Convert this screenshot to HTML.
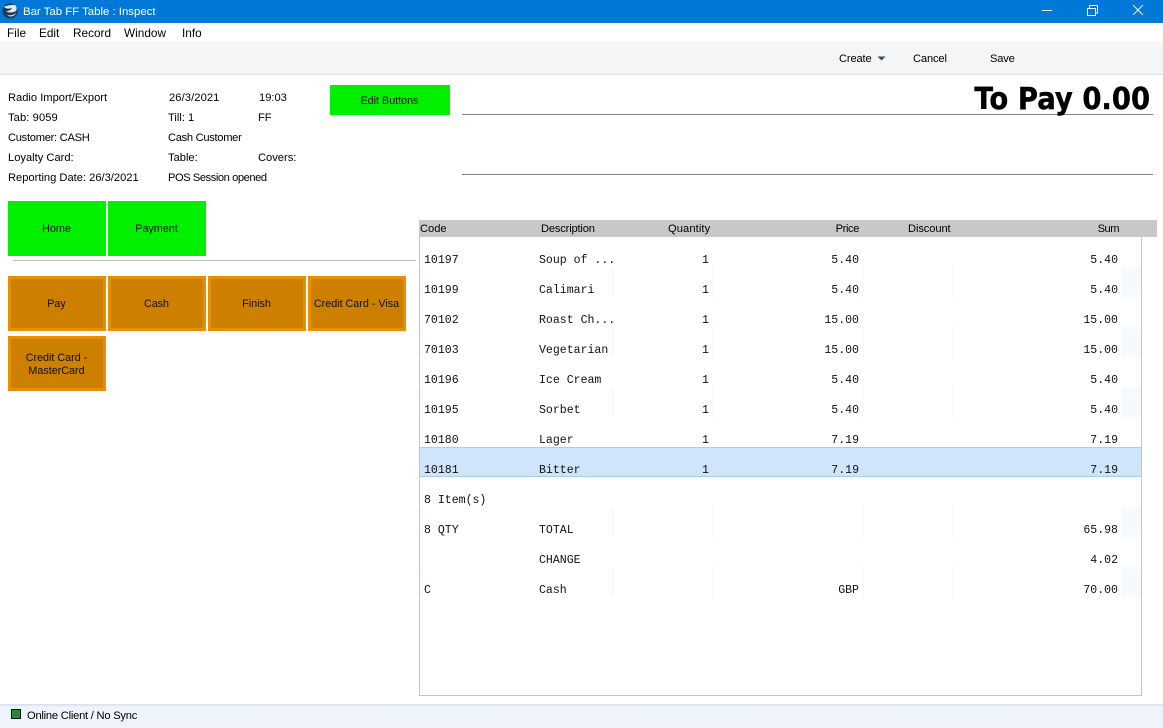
<!DOCTYPE html>
<html><head><meta charset="utf-8"><style>
html,body{margin:0;padding:0;width:1163px;height:728px;overflow:hidden;background:#fff}
body{position:relative;font-family:"Liberation Sans",sans-serif;font-size:11.15px;color:#000}
.a{position:absolute;white-space:nowrap;line-height:14px}
.b{position:absolute;box-sizing:border-box;display:flex;align-items:center;justify-content:center;text-align:center;line-height:13px;color:#101000;padding:2px 1px 0 0;font-size:10.75px}
.g{background:#00f000;width:98px;height:55px}
.o{background:#cd7f00;border:3px solid #e88f00;width:98px;height:55px}
.m{position:absolute;font-family:"Liberation Mono",monospace;font-size:11.55px;line-height:14px;white-space:pre;color:#111}
.s{position:absolute;background:#f5faff}
.r{text-align:right}
</style></head><body>
<div style="position:absolute;left:0;top:0;width:1163px;height:23px;background:#0078d7"></div>
<svg style="position:absolute;left:2px;top:2px" width="16" height="18" viewBox="0 0 16 18"><circle cx="8" cy="9" r="7.5" fill="#1f3a55"/><path d="M2 5C5 3 9 3 13 3C15 5 15 7 14 9C11 11 6 11 4 9C7 9 9 8 10 6C7 7 4 7 2 5Z" fill="#dfe7ef"/><path d="M5 13C8 14 12 13 14 11C13 14 8 16 5 13Z" fill="#dfe7ef"/></svg>
<div class="a" style="left:23px;top:5px;color:#fff;font-size:11.4px">Bar Tab FF Table : Inspect</div>
<svg style="position:absolute;left:1030px;top:0" width="125" height="23" viewBox="0 0 125 23" fill="none" stroke="#fff" stroke-width="1"><path d="M12 10.5H22"/><path d="M57.5 8.5H65.5V15.5H57.5ZM59.5 8V5.5H67.5V13H66"/><path d="M103 5L113 15M113 5L103 15"/></svg>

<div class="a" style="left:7px;top:26px;font-size:11.8px">File</div>
<div class="a" style="left:39px;top:26px;font-size:11.8px">Edit</div>
<div class="a" style="left:73px;top:26px;font-size:11.8px">Record</div>
<div class="a" style="left:124px;top:26px;font-size:11.8px">Window</div>
<div class="a" style="left:182px;top:26px;font-size:11.8px">Info</div>

<div style="position:absolute;left:0;top:41px;width:1163px;height:33px;background:#f4f5f7;border-bottom:1px solid #e3e3e3"></div>
<div class="a" style="left:839px;top:52px;letter-spacing:-.15px">Create</div>
<svg style="position:absolute;left:877px;top:56px" width="9" height="5"><path d="M0.5 0.5H8.5L4.5 4.5Z" fill="#3c4a5c"/></svg>
<div class="a" style="left:913px;top:52px;letter-spacing:-.15px">Cancel</div>
<div class="a" style="left:990px;top:52px;letter-spacing:-.2px">Save</div>

<div class="a" style="left:8px;top:91px">Radio Import/Export</div>
<div class="a" style="left:8px;top:111px;letter-spacing:.1px">Tab: 9059</div>
<div class="a" style="left:8px;top:131px;letter-spacing:-.28px">Customer: CASH</div>
<div class="a" style="left:8px;top:151px">Loyalty Card:</div>
<div class="a" style="left:8px;top:171px">Reporting Date: 26/3/2021</div>
<div class="a" style="left:169px;top:91px;letter-spacing:.1px">26/3/2021</div>
<div class="a" style="left:168px;top:111px">Till: 1</div>
<div class="a" style="left:168px;top:131px;letter-spacing:-.3px">Cash Customer</div>
<div class="a" style="left:168px;top:151px">Table:</div>
<div class="a" style="left:168px;top:171px;letter-spacing:-.44px">POS Session opened</div>
<div class="a" style="left:259px;top:91px">19:03</div>
<div class="a" style="left:258px;top:111px">FF</div>
<div class="a" style="left:258px;top:151px">Covers:</div>

<div class="b" style="left:330px;top:85px;width:120px;height:30px;background:#00f000">Edit Buttons</div>
<div style="position:absolute;left:462px;top:114px;width:691px;height:1px;background:#808080"></div>
<div style="position:absolute;left:462px;top:174px;width:691px;height:1px;background:#808080"></div>
<div class="a" style="right:13px;top:82px;font-family:'DejaVu Sans',sans-serif;font-weight:bold;font-size:30px;line-height:36px;transform:scaleX(.915);transform-origin:right center;-webkit-text-stroke:.4px #000">To Pay 0.00</div>

<div class="b g" style="left:8px;top:201px">Home</div>
<div class="b g" style="left:108px;top:201px">Payment</div>
<div style="position:absolute;left:13px;top:260px;width:403px;height:1px;background:#c0c0c0"></div>
<div class="b o" style="left:8px;top:276px">Pay</div>
<div class="b o" style="left:108px;top:276px">Cash</div>
<div class="b o" style="left:208px;top:276px">Finish</div>
<div class="b o" style="left:308px;top:276px">Credit Card - Visa</div>
<div class="b o" style="left:8px;top:336px">Credit Card -<br>MasterCard</div>

<!-- stripes -->
<div class="s" style="left:420px;top:267px;width:3px;height:30px"></div><div class="s" style="left:612px;top:267px;width:2px;height:30px"></div><div class="s" style="left:712px;top:267px;width:2px;height:30px"></div><div class="s" style="left:862px;top:267px;width:2px;height:30px"></div><div class="s" style="left:952px;top:267px;width:2px;height:30px"></div><div class="s" style="left:1121px;top:267px;width:20px;height:30px"></div>
<div class="s" style="left:420px;top:327px;width:3px;height:30px"></div><div class="s" style="left:612px;top:327px;width:2px;height:30px"></div><div class="s" style="left:712px;top:327px;width:2px;height:30px"></div><div class="s" style="left:862px;top:327px;width:2px;height:30px"></div><div class="s" style="left:952px;top:327px;width:2px;height:30px"></div><div class="s" style="left:1121px;top:327px;width:20px;height:30px"></div>
<div class="s" style="left:420px;top:387px;width:3px;height:30px"></div><div class="s" style="left:612px;top:387px;width:2px;height:30px"></div><div class="s" style="left:712px;top:387px;width:2px;height:30px"></div><div class="s" style="left:862px;top:387px;width:2px;height:30px"></div><div class="s" style="left:952px;top:387px;width:2px;height:30px"></div><div class="s" style="left:1121px;top:387px;width:20px;height:30px"></div>
<div class="s" style="left:420px;top:507px;width:3px;height:30px"></div><div class="s" style="left:612px;top:507px;width:2px;height:30px"></div><div class="s" style="left:712px;top:507px;width:2px;height:30px"></div><div class="s" style="left:862px;top:507px;width:2px;height:30px"></div><div class="s" style="left:952px;top:507px;width:2px;height:30px"></div><div class="s" style="left:1121px;top:507px;width:20px;height:30px"></div>
<div class="s" style="left:420px;top:567px;width:3px;height:30px"></div><div class="s" style="left:612px;top:567px;width:2px;height:30px"></div><div class="s" style="left:712px;top:567px;width:2px;height:30px"></div><div class="s" style="left:862px;top:567px;width:2px;height:30px"></div><div class="s" style="left:952px;top:567px;width:2px;height:30px"></div><div class="s" style="left:1121px;top:567px;width:20px;height:30px"></div>

<!-- grid frame -->
<div style="position:absolute;left:419px;top:236px;width:723px;height:460px;box-sizing:border-box;border:1px solid #c4c4c4;border-top:0"></div>
<div style="position:absolute;left:420px;top:447px;width:721px;height:30px;box-sizing:border-box;background:#cfe5fb;border-top:1px solid #a8cdf0;border-bottom:1px solid #a8cdf0"></div>
<div style="position:absolute;left:419px;top:220px;width:738px;height:17px;background:#c8c8c8"></div>
<div class="a" style="left:420px;top:222px">Code</div>
<div class="a" style="left:541px;top:222px;letter-spacing:-.18px">Description</div>
<div class="a" style="left:668px;top:222px;letter-spacing:.1px">Quantity</div>
<div class="a r" style="right:304px;top:222px;letter-spacing:-.4px">Price</div>
<div class="a" style="left:908px;top:222px;letter-spacing:-.1px">Discount</div>
<div class="a r" style="right:44px;top:222px;letter-spacing:-.5px">Sum</div>

<div class="m" style="left:424px;top:254px">10197</div><div class="m" style="left:539px;top:254px">Soup of ...</div><div class="m" style="left:702px;top:254px">1</div><div class="m" style="right:304px;top:254px">5.40</div><div class="m" style="right:45px;top:254px">5.40</div>
<div class="m" style="left:424px;top:284px">10199</div><div class="m" style="left:539px;top:284px">Calimari</div><div class="m" style="left:702px;top:284px">1</div><div class="m" style="right:304px;top:284px">5.40</div><div class="m" style="right:45px;top:284px">5.40</div>
<div class="m" style="left:424px;top:314px">70102</div><div class="m" style="left:539px;top:314px">Roast Ch...</div><div class="m" style="left:702px;top:314px">1</div><div class="m" style="right:304px;top:314px">15.00</div><div class="m" style="right:45px;top:314px">15.00</div>
<div class="m" style="left:424px;top:344px">70103</div><div class="m" style="left:539px;top:344px">Vegetarian</div><div class="m" style="left:702px;top:344px">1</div><div class="m" style="right:304px;top:344px">15.00</div><div class="m" style="right:45px;top:344px">15.00</div>
<div class="m" style="left:424px;top:374px">10196</div><div class="m" style="left:539px;top:374px">Ice Cream</div><div class="m" style="left:702px;top:374px">1</div><div class="m" style="right:304px;top:374px">5.40</div><div class="m" style="right:45px;top:374px">5.40</div>
<div class="m" style="left:424px;top:404px">10195</div><div class="m" style="left:539px;top:404px">Sorbet</div><div class="m" style="left:702px;top:404px">1</div><div class="m" style="right:304px;top:404px">5.40</div><div class="m" style="right:45px;top:404px">5.40</div>
<div class="m" style="left:424px;top:434px">10180</div><div class="m" style="left:539px;top:434px">Lager</div><div class="m" style="left:702px;top:434px">1</div><div class="m" style="right:304px;top:434px">7.19</div><div class="m" style="right:45px;top:434px">7.19</div>
<div class="m" style="left:424px;top:464px">10181</div><div class="m" style="left:539px;top:464px">Bitter</div><div class="m" style="left:702px;top:464px">1</div><div class="m" style="right:304px;top:464px">7.19</div><div class="m" style="right:45px;top:464px">7.19</div>
<div class="m" style="left:424px;top:494px">8 Item(s)</div>
<div class="m" style="left:424px;top:524px">8 QTY</div><div class="m" style="left:539px;top:524px">TOTAL</div><div class="m" style="right:45px;top:524px">65.98</div>
<div class="m" style="left:539px;top:554px">CHANGE</div><div class="m" style="right:45px;top:554px">4.02</div>
<div class="m" style="left:424px;top:584px">C</div><div class="m" style="left:539px;top:584px">Cash</div><div class="m" style="right:304px;top:584px">GBP</div><div class="m" style="right:45px;top:584px">70.00</div>

<!-- status bar -->
<div style="position:absolute;left:0;top:704px;width:1163px;height:24px;background:linear-gradient(#d5dfee 0,#eff3fb 3px)"></div>
<div style="position:absolute;left:11px;top:709px;width:10px;height:10px;box-sizing:border-box;background:#1f8a3a;border:1px solid #111"></div>
<div class="a" style="left:27px;top:709px;letter-spacing:-.22px">Online Client / No Sync</div>
</body></html>
